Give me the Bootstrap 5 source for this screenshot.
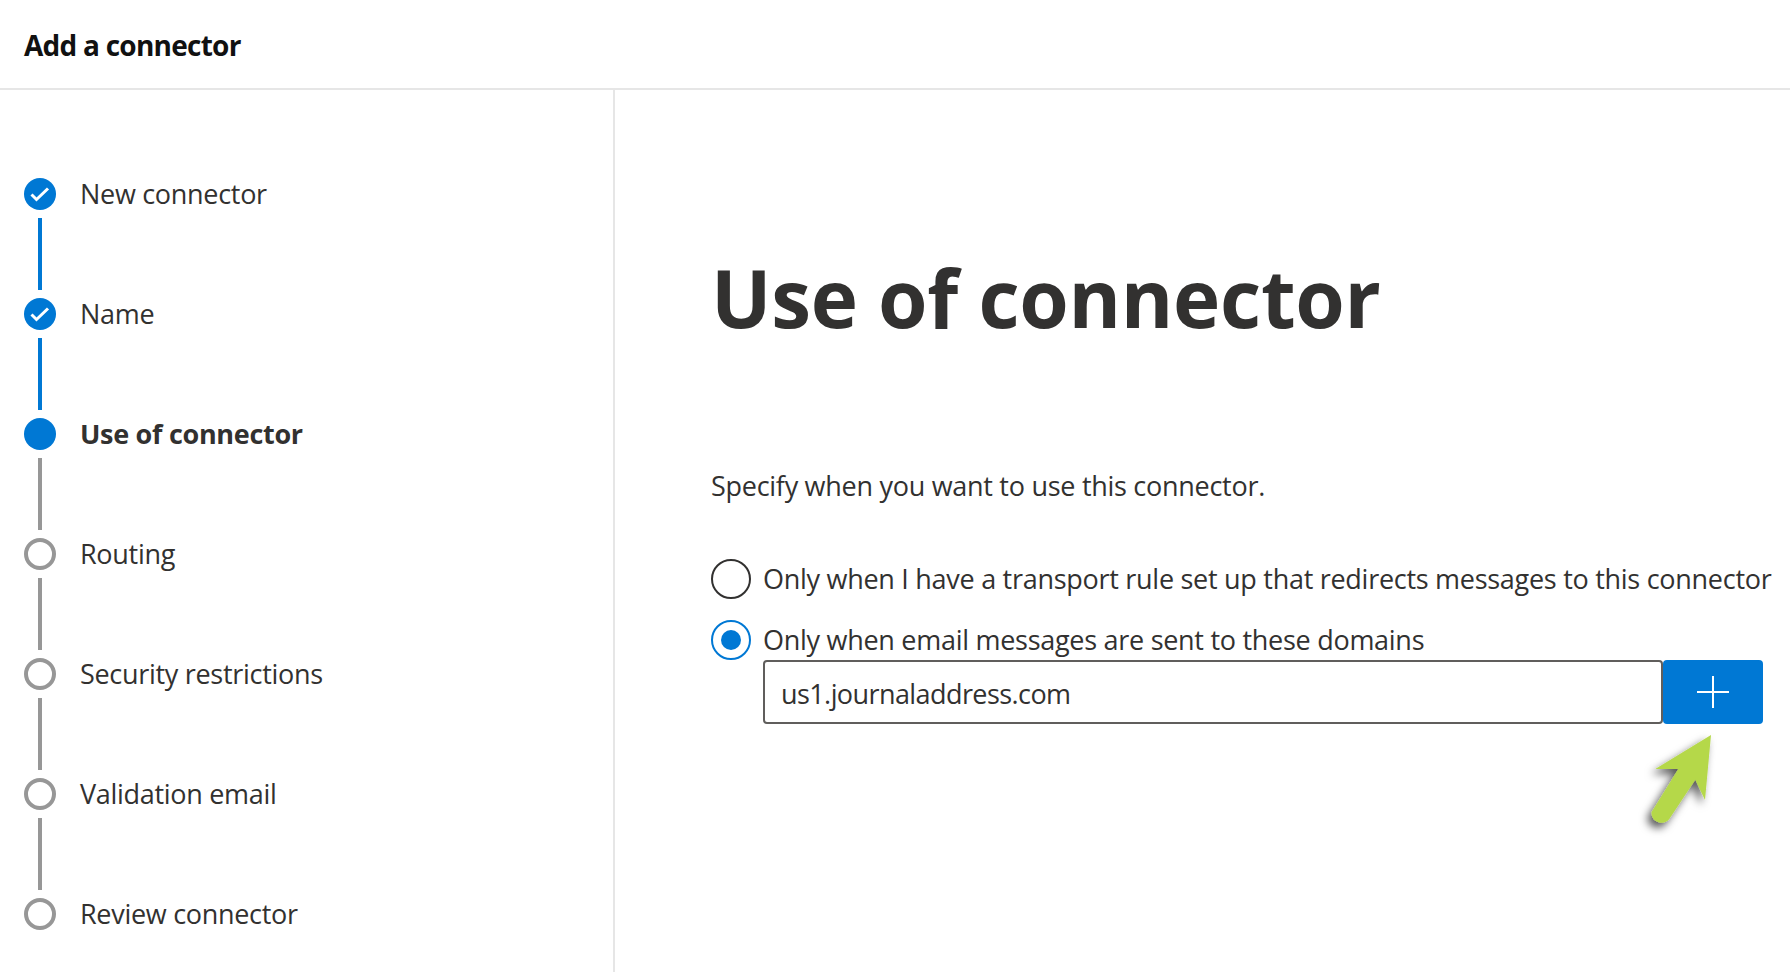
<!DOCTYPE html>
<html lang="en"><head><meta charset="utf-8"><title>Add a connector</title>
<link rel="stylesheet" href="https://cdn.jsdelivr.net/npm/bootstrap@5.3.0/dist/css/bootstrap.min.css">
<style>
html,body{height:100%;overflow:hidden}
body{font-family:"Open Sans","Noto Sans",sans-serif;color:#323130;background:#fff}
.top-bar{height:90px;border-bottom:2px solid #e6e6e6;padding:1px 24px 0;font-size:28px;font-weight:700;color:#111;letter-spacing:-.75px}
.shell{height:882px}
.side{width:615px;border-right:2px solid #e6e6e6;padding:88px 0 0 24px}
.step{height:32px;font-size:27px;line-height:32px;letter-spacing:-.3px}
.dot{width:32px;height:32px;border-radius:50%;flex:none;margin-right:24px}
.dot-on{background:#0078d4}
.dot-off{border:4px solid #979797}
.link{width:4px;height:72px;margin:8px 0 8px 14px;background:#979797}
.link-on{background:#0078d4}
.main{padding:0 0 0 96px;flex:1;min-width:0}
.title{font-size:80px;font-weight:700;line-height:108px;margin:153px 0 0;letter-spacing:-.3px;color:#323130}
.lede{font-size:27px;line-height:38px;margin:116px 0 0;letter-spacing:-.28px}
.choice{font-size:27px;line-height:40px;height:40px;letter-spacing:-.28px;white-space:nowrap}
.choice-a{margin-top:54px}
.choice-b{margin-top:21px}
.ring{width:40px;height:40px;border-radius:50%;flex:none;margin-right:12px;border:2px solid #323130}
.ring-on{border-color:#0078d4;background:#fff}
.ring-on::after{content:"";width:20px;height:20px;border-radius:50%;background:#0078d4}
.entry{margin-left:52px;width:1000px;height:64px}
.entry-text{width:900px;height:64px;border:2px solid #605e5c;border-radius:4px;padding:4px 16px 0;font-size:27px;letter-spacing:-.58px;color:#323130}
.add{width:100px;height:64px;background:#0078d4;border-radius:4px;border:0}
.pointer{margin:11px 0 0 940px;display:block;width:104px;height:112px;overflow:visible}
</style></head><body>
<header class="top-bar d-flex align-items-center">Add a connector</header>
<div class="shell d-flex">
<nav class="side flex-shrink-0">
<div class="step d-flex"><span class="dot dot-on d-flex align-items-center justify-content-center"><svg width="20" height="20" viewBox="0 0 20 20"><path d="M1.5 10.5l5 5L18 4.5" fill="none" stroke="#fff" stroke-width="3"/></svg></span>New connector</div>
<div class="link link-on"></div>
<div class="step d-flex"><span class="dot dot-on d-flex align-items-center justify-content-center"><svg width="20" height="20" viewBox="0 0 20 20"><path d="M1.5 10.5l5 5L18 4.5" fill="none" stroke="#fff" stroke-width="3"/></svg></span>Name</div>
<div class="link link-on"></div>
<div class="step d-flex fw-bold"><span class="dot dot-on"></span>Use of connector</div>
<div class="link"></div>
<div class="step d-flex"><span class="dot dot-off"></span>Routing</div>
<div class="link"></div>
<div class="step d-flex"><span class="dot dot-off"></span>Security restrictions</div>
<div class="link"></div>
<div class="step d-flex"><span class="dot dot-off"></span>Validation email</div>
<div class="link"></div>
<div class="step d-flex"><span class="dot dot-off"></span>Review connector</div>
</nav>
<main class="main">
<h1 class="title">Use of connector</h1>
<p class="lede">Specify when you want to use this connector.</p>
<div class="choice choice-a d-flex"><span class="ring"></span>Only when I have a transport rule set up that redirects messages to this connector</div>
<div class="choice choice-b d-flex"><span class="ring ring-on d-flex align-items-center justify-content-center"></span>Only when email messages are sent to these domains</div>
<div class="entry d-flex">
<div class="entry-text d-flex align-items-center">us1.journaladdress.com</div>
<button class="add d-flex align-items-center justify-content-center" aria-label="Add"><svg width="32" height="32" viewBox="0 0 32 32"><path d="M16 0v32M0 16h32" stroke="#fff" stroke-width="2"/></svg></button>
</div>
<svg class="pointer" viewBox="0 0 104 112"><defs><filter id="sh" x="-40%" y="-40%" width="180%" height="180%"><feDropShadow dx="-4" dy="5" stdDeviation="4" flood-color="#000" flood-opacity=".65"/></filter></defs><path d="M60 0 L54 65 L44.3 44.7 L18.3 84 A10 10 0 0 1 .6 77 L27.3 34 L4.3 34Z" fill="#b5d84a" filter="url(#sh)"/></svg>
</main>
</div>
</body></html>
